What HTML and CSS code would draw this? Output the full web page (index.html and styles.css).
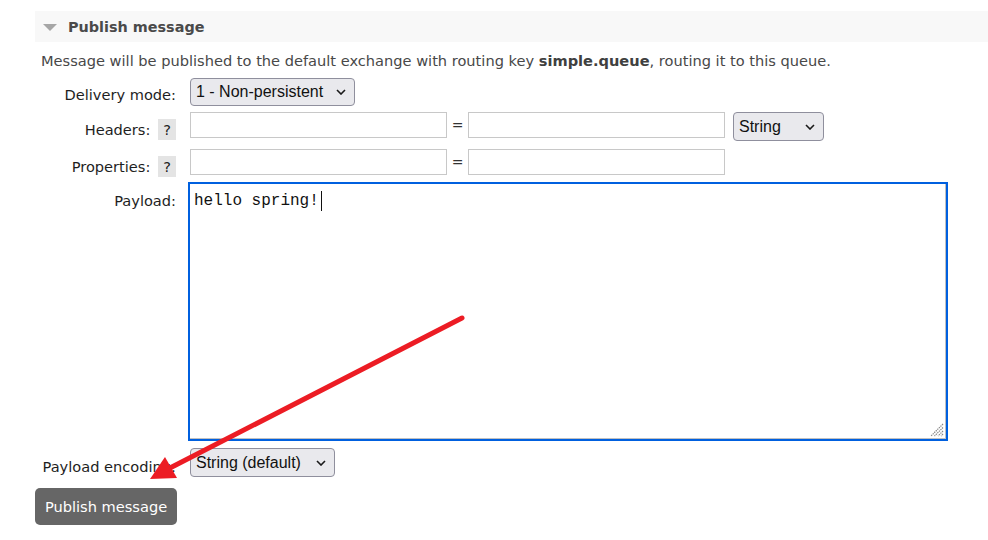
FILE: index.html
```html
<!DOCTYPE html>
<html>
<head>
<meta charset="utf-8">
<link rel="stylesheet" href="styles.css">
</head>
<body>
<div class="page">
  <div class="section-head">
    <span class="tri"></span>
    <h2 class="title">Publish message</h2>
  </div>
  <div class="section-body">
    <p class="desc">Message will be published to the default exchange with routing key <b>simple.queue</b>, routing it to this queue.</p>
    <div class="form">
      <div class="row row-mode">
        <div class="label">Delivery mode:</div>
        <div class="field">
          <span class="sel sel-mode">1 - Non-persistent<svg class="chev" width="10" height="6" viewBox="0 0 10 6"><path d="M1 1 L5 5 L9 1" fill="none" stroke="#1a1a1a" stroke-width="1.6"/></svg></span>
        </div>
      </div>
      <div class="row row-kv">
        <div class="label label-help">Headers: <span class="help">?</span></div>
        <div class="field">
          <span class="input"></span><span class="eq">=</span><span class="input"></span>
          <span class="sel sel-type">String<svg class="chev" width="10" height="6" viewBox="0 0 10 6"><path d="M1 1 L5 5 L9 1" fill="none" stroke="#1a1a1a" stroke-width="1.6"/></svg></span>
        </div>
      </div>
      <div class="row row-kv2">
        <div class="label label-help">Properties: <span class="help">?</span></div>
        <div class="field">
          <span class="input"></span><span class="eq">=</span><span class="input"></span>
        </div>
      </div>
      <div class="row row-payload">
        <div class="label">Payload:</div>
        <div class="field">
          <div class="payload">hello spring!<span class="caret"></span>
            <svg class="grip" width="14" height="14" viewBox="0 0 14 14"><g stroke="#888" stroke-width="1.2" stroke-dasharray="1.4 0.8"><path d="M13 1 L1 13"/><path d="M13 4.5 L4.5 13"/><path d="M13 8 L8 13"/><path d="M13 11 L11 13"/></g></svg>
          </div>
        </div>
      </div>
      <div class="row row-enc">
        <div class="label">Payload encoding:</div>
        <div class="field">
          <span class="sel sel-enc">String (default)<svg class="chev" width="10" height="6" viewBox="0 0 10 6"><path d="M1 1 L5 5 L9 1" fill="none" stroke="#1a1a1a" stroke-width="1.6"/></svg></span>
        </div>
      </div>
    </div>
    <button class="btn">Publish message</button>
  </div>
  <svg class="arrow" width="988" height="540" viewBox="0 0 988 540">
    <line x1="462" y1="318" x2="168" y2="469" stroke="#ec1c24" stroke-width="5" stroke-linecap="round"/>
    <polygon points="150,479 165,457 177,478" fill="#ec1c24"/>
  </svg>
</div>
</body>
</html>
```
FILE: styles.css
```css
html, body {
  margin: 0;
  padding: 0;
  background: #fff;
}
.page {
  position: relative;
  width: 988px;
  height: 540px;
  overflow: hidden;
  font-family: "DejaVu Sans", Verdana, sans-serif;
  color: #484848;
  padding: 11px 0 0 35px;
  box-sizing: border-box;
}
.section-head {
  height: 31px;
  background: #f8f8f8;
  display: flex;
  align-items: center;
}
.tri {
  width: 0;
  height: 0;
  border-left: 7px solid transparent;
  border-right: 7px solid transparent;
  border-top: 7px solid #a6a6a6;
  margin: 2px 11px 0 8px;
}
.title {
  margin: 0;
  font-size: 14.4px;
  font-weight: bold;
  color: #4a4a4a;
}
.section-body {
  padding-left: 6px;
}
.desc {
  margin: 10px 0 8px 0;
  font-size: 14.6px;
  line-height: 18px;
  color: #484848;
}
.desc b { color: #404040; }
.form {
  display: flex;
  flex-direction: column;
  color: #1e1e1e;
}
.row {
  display: flex;
  align-items: flex-start;
}
.label {
  width: 135px;
  flex: none;
  text-align: right;
  font-size: 14.6px;
  line-height: 17px;
  padding-top: 8px;
  margin-right: 14px;
  white-space: nowrap;
}
.label-help {
  padding-top: 7px;
}
.help {
  display: inline-block;
  width: 18px;
  height: 21px;
  line-height: 21px;
  text-align: center;
  background: #e4e4e4;
  margin-left: 3px;
}
.field {
  display: flex;
  align-items: flex-start;
}
.sel {
  position: relative;
  display: inline-flex;
  align-items: center;
  box-sizing: border-box;
  background: #e9e9ed;
  border: 1px solid #8f8f9d;
  border-radius: 4px;
  font-family: "Liberation Sans", Arial, sans-serif;
  font-size: 16px;
  color: #111;
  padding-left: 5px;
}
.chev {
  position: absolute;
  right: 8px;
  top: 50%;
  margin-top: -3px;
}
.sel-mode { width: 165px; height: 28px; }
.sel-type { width: 91px; height: 29px; margin-left: 8px; }
.sel-enc { width: 145px; height: 29px; }
.row-kv { margin-top: 6px; height: 29px; }
.row-kv2 { margin-top: 8px; height: 28px; }
.row-payload { margin-top: 5px; }
.row-payload .label { padding-top: 10px; }
.row-enc { margin-top: 7px; }
.row-enc .label { padding-top: 10px; }
.input {
  display: inline-block;
  box-sizing: border-box;
  width: 257px;
  height: 26px;
  border: 1px solid #c8c8c8;
  background: #fff;
}
.eq {
  width: 21px;
  text-align: center;
  font-size: 14px;
  line-height: 26px;
  color: #333;
}
.payload {
  position: relative;
  box-sizing: border-box;
  width: 760px;
  height: 259px;
  margin-left: -2px;
  border: 2px solid #0060df;
  box-shadow: inset -1px -1px 0 #c0c0c0;
  font-family: "Liberation Mono", "DejaVu Sans Mono", monospace;
  font-size: 16px;
  line-height: 20px;
  padding: 7px 0 0 4px;
  color: #111;
}
.caret {
  display: inline-block;
  width: 1px;
  height: 20px;
  background: #111;
  vertical-align: top;
  margin-left: 2px;
}
.grip {
  position: absolute;
  right: 2px;
  bottom: 2px;
}
.btn {
  display: block;
  margin: 11px 0 0 -6px;
  width: 142px;
  height: 37px;
  border: none;
  border-radius: 5px;
  background: #666;
  color: #fff;
  font-family: "DejaVu Sans", Verdana, sans-serif;
  font-size: 14.6px;
  padding: 0;
}
.arrow {
  position: absolute;
  left: 0;
  top: 0;
  pointer-events: none;
}
```
